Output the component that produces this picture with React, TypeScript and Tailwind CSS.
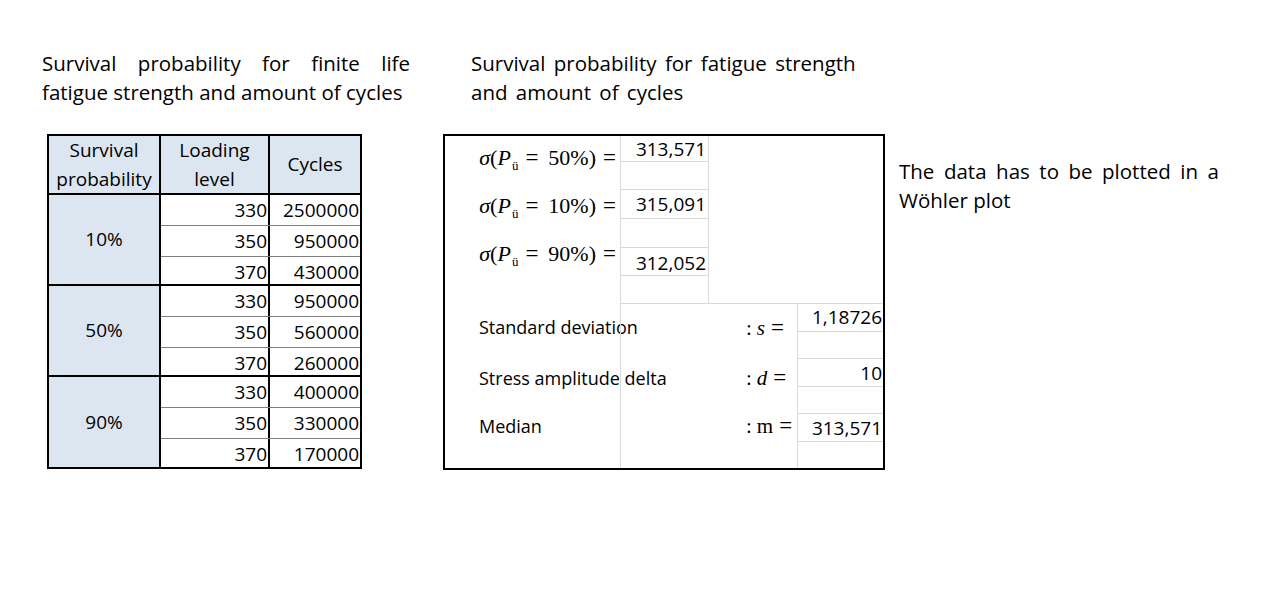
import React from "react";

const groups = [
  { p: "10%", rows: [["330", "2500000"], ["350", "950000"], ["370", "430000"]] },
  { p: "50%", rows: [["330", "950000"], ["350", "560000"], ["370", "260000"]] },
  { p: "90%", rows: [["330", "400000"], ["350", "330000"], ["370", "170000"]] },
];

function Formula({ p }: { p: string }) {
  return (
    <div className="h-[29px] font-['Liberation_Serif',serif] text-[22px] leading-[29px] whitespace-nowrap text-right">
      <span className="italic">σ</span>(<span className="italic">P</span>
      <span className="text-[13px] leading-[10px] align-[-5px] ml-[1px]">ü</span>
      <span className="ml-[7px] mr-[10px] text-[23px]">=</span>
      {p})<span className="ml-[7px] text-[23px]">=</span>
    </div>
  );
}

function Op({ v, italic }: { v: string; italic: boolean }) {
  return (
    <div className="font-['Liberation_Serif',serif] text-[21px] leading-[29px] whitespace-nowrap">
      :<span className={italic ? "italic ml-[5px]" : "ml-[5px]"}>{v}</span>
      <span className="ml-[6px] text-[23px]">=</span>
    </div>
  );
}

export default function App() {
  return (
    <div className="w-[1279px] h-[602px] bg-white text-black flex items-start pt-[49px] font-['Open_Sans','Liberation_Sans',sans-serif] text-[19px] leading-[29px]">
      {/* Column 1 */}
      <div className="ml-[42px] w-[368px] flex flex-col">
        <p className="text-justify text-[20.5px]">
          Survival probability for finite life fatigue strength and amount of cycles
        </p>
        <div className="ml-[5px] mt-[27px] w-[315px] border-2 border-black flex flex-col">
          <div className="h-[59px] flex border-b-2 border-black bg-[#dce6f1]">
            <div className="w-[112px] border-r-2 border-black flex items-center justify-center text-center">
              Survival
              <br />
              probability
            </div>
            <div className="w-[109px] border-r-2 border-black flex items-center justify-center text-center">
              Loading
              <br />
              level
            </div>
            <div className="flex-1 flex items-center justify-center">Cycles</div>
          </div>
          {groups.map((g, gi) => (
            <div
              key={g.p}
              className={
                gi < 2
                  ? "h-[91px] flex border-b-2 border-black"
                  : "h-[90px] flex"
              }
            >
              <div className="w-[112px] border-r-2 border-black bg-[#dce6f1] flex items-center justify-center">
                {g.p}
              </div>
              <div className="flex-1 flex flex-col">
                {g.rows.map((r, ri) => (
                  <div
                    key={ri}
                    className={
                      ri < 2
                        ? "flex-1 flex border-b border-[#808080]"
                        : "flex-1 flex"
                    }
                  >
                    <div className="w-[109px] border-r-2 border-black flex items-center justify-end pr-[1px] pt-[1px]">
                      {r[0]}
                    </div>
                    <div className="flex-1 flex items-center justify-end pr-[1px] pt-[1px]">{r[1]}</div>
                  </div>
                ))}
              </div>
            </div>
          ))}
        </div>
      </div>

      {/* Column 2 */}
      <div className="ml-[33px] w-[442px] flex flex-col">
        <p className="pl-[28px] text-[20.5px] [word-spacing:3px]">
          Survival probability for fatigue strength and amount of cycles
        </p>
        <div className="mt-[27px] h-[336px] border-2 border-black flex flex-col">
          {/* top section */}
          <div className="h-[167px] flex">
            <div className="w-[175px] flex flex-col items-end pr-[4px] pt-[7px] gap-[19px]">
              <Formula p="50%" />
              <Formula p="10%" />
              <Formula p="90%" />
            </div>
            <div className="w-[89px] border-x border-[#d9d9d9] flex flex-col">
              <div className="h-[26px] border-b border-[#d9d9d9] flex items-center justify-end pr-[2px] pt-[2px]">313,571</div>
              <div className="h-[28px] border-b border-[#d9d9d9]" />
              <div className="h-[29px] border-b border-[#d9d9d9] flex items-center justify-end pr-[2px] pt-[1px]">315,091</div>
              <div className="h-[29px] border-b border-[#d9d9d9]" />
              <div className="h-[28px] border-b border-[#d9d9d9] flex items-center justify-end pr-[2px] pt-[4px]">312,052</div>
              <div className="flex-1" />
            </div>
            <div className="flex-1" />
          </div>
          {/* bottom section */}
          <div className="flex-1 flex">
            <div className="w-[175px] flex flex-col pl-[34px] whitespace-nowrap text-[18px]">
              <div className="h-[49px] flex items-center">Standard deviation</div>
              <div className="h-[52px] flex items-center">Stress amplitude delta</div>
              <div className="h-[44px] flex items-center">Median</div>
            </div>
            <div className="w-[177px] border-l border-t border-[#d9d9d9] flex flex-col pl-[125px]">
              <div className="h-[48px] flex items-center">
                <Op v="s" italic />
              </div>
              <div className="h-[52px] flex items-center">
                <Op v="d" italic />
              </div>
              <div className="h-[44px] flex items-center">
                <Op v="m" italic={false} />
              </div>
            </div>
            <div className="flex-1 border-l border-t border-[#d9d9d9] flex flex-col">
              <div className="h-[28px] border-b border-[#d9d9d9] flex items-center justify-end pr-[1px]">1,18726</div>
              <div className="h-[27px] border-b border-[#d9d9d9]" />
              <div className="h-[28px] border-b border-[#d9d9d9] flex items-center justify-end pr-[1px] pt-[2px]">10</div>
              <div className="h-[27px] border-b border-[#d9d9d9]" />
              <div className="h-[28px] border-b border-[#d9d9d9] flex items-center justify-end pr-[1px] pt-[2px]">313,571</div>
              <div className="flex-1" />
            </div>
          </div>
        </div>
      </div>

      {/* Column 3 */}
      <p className="ml-[14px] mt-[108px] w-[320px] text-justify text-[20.5px]">
        The data has to be plotted in a Wöhler plot
      </p>
    </div>
  );
}
